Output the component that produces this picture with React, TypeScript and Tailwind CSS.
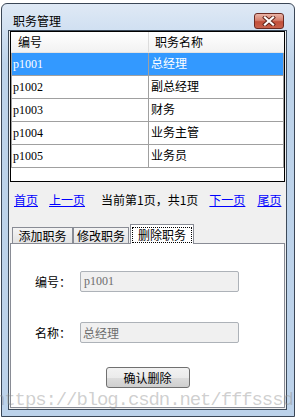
import React from 'react';

const rows = [
  { id: 'p1001', name: '总经理' },
  { id: 'p1002', name: '副总经理' },
  { id: 'p1003', name: '财务' },
  { id: 'p1004', name: '业务主管' },
  { id: 'p1005', name: '业务员' },
];

const cjk = 'font-["Noto_Sans_CJK_SC",sans-serif]';
const mixed = 'font-["Liberation_Serif","Noto_Sans_CJK_SC",serif]';

function CloseButton() {
  return (
    <div className="w-[30px] h-[16px] mt-[9px] mr-[3px] rounded-[3px] border border-[#6b2a22] bg-[linear-gradient(to_bottom,#eab3a6_0%,#d6806e_45%,#c24f3a_55%,#c8614c_100%)] flex items-center justify-center">
      <svg width="14" height="10" viewBox="0 0 14 10">
        <path d="M3 1.5 L11 8.5 M11 1.5 L3 8.5" stroke="#5c2219" strokeWidth="4" strokeLinecap="square" />
        <path d="M3 1.5 L11 8.5 M11 1.5 L3 8.5" stroke="#ffffff" strokeWidth="2.2" strokeLinecap="square" />
      </svg>
    </div>
  );
}

function Tab({ label, width }: { label: string; width: string }) {
  return (
    <div
      className={`${width} h-[16px] border border-b-0 border-[#898c95] bg-[linear-gradient(to_bottom,#f4f4f4,#e3e3e3)] flex items-center justify-center text-[12px] leading-[14px] text-black`}
    >
      {label}
    </div>
  );
}

export default function App() {
  return (
    <div className={`relative w-[296px] h-[420px] bg-white overflow-hidden pt-[3px] pl-[1px] ${cjk}`}>
      {/* window */}
      <div className="w-[294px] h-[414px] border border-[#3a4656] rounded-t-[6px] bg-[linear-gradient(to_bottom,#dfe9f5_0px,#cfdff1_28px,#bdd3ea_60px,#bcd2ea_100%)] flex flex-col pl-[6px] pr-[7px] pb-[6px]">
        {/* title bar */}
        <div className="h-[26px] flex items-start justify-between">
          <div className="pl-[5px] pt-[9px] text-[12px] leading-[16px] text-black">职务管理</div>
          <CloseButton />
        </div>

        {/* client */}
        <div className="flex-1 border border-[#3c4a5a] bg-[#f0f0f0] flex flex-col">
          {/* list view */}
          <div className="mx-[1px] h-[151px] border border-black bg-white flex flex-col">
            <div className="h-[21px] flex border-b border-[#e3e3e3] bg-[linear-gradient(to_bottom,#ffffff,#f2f2f2)] text-[12px] leading-[20px] text-black">
              <div className="w-[138px] pl-[7px] border-r border-[#dcdcdc]">编号</div>
              <div className="flex-1 pl-[6px]">职务名称</div>
            </div>
            {rows.map((r, i) => {
              const sel = i === 0;
              return (
                <div
                  key={r.id}
                  className={`h-[23px] w-[273px] flex border-b border-[#a0a0a0] text-[12px] leading-[22px] ${mixed} ${
                    sel ? 'bg-[#3399ff] text-white' : 'text-black'
                  }`}
                >
                  <div className="w-[138px] border-x border-[#a0a0a0] pl-[1px]">{r.id}</div>
                  <div className="flex-1 border-r border-[#a0a0a0] pl-[2px]">{r.name}</div>
                </div>
              );
            })}
          </div>

          {/* pager */}
          <div className="h-[42px] flex items-start pt-[10px] pl-[5px] text-[12px] leading-[16px]">
            <span className="text-[#0000ff] underline">首页</span>
            <span className="ml-[11px] text-[#0000ff] underline">上一页</span>
            <span className="ml-[16px] text-black">当前第1页，共1页</span>
            <span className="ml-[11px] text-[#0000ff] underline">下一页</span>
            <span className="ml-[12px] text-[#0000ff] underline">尾页</span>
          </div>

          {/* tabs */}
          <div className="h-[19px] flex items-end pl-[3px]">
            <Tab label="添加职务" width="w-[61px]" />
            <Tab label="修改职务" width="w-[56px]" />
            <div className="relative z-10 ml-[1px] mb-[-1px] w-[64px] h-[20px] border border-b-0 border-[#898c95] bg-white px-[1px] pt-[2px] pb-[1px]">
              <div className="h-full border border-dotted border-black flex items-center justify-center text-[12px] leading-[14px] text-black">
                删除职务
              </div>
            </div>
          </div>

          <div className="mx-[1px] h-[165px] border border-[#898c95] bg-white flex flex-col pt-[27px] pl-[24px]">
            <div className="flex items-center h-[21px]">
              <div className="w-[45px] text-[12px] leading-[16px] text-black">编号：</div>
              <div className={`w-[159px] h-[21px] rounded-[2px] border border-[#adb2b8] bg-[#f0f0f0] pl-[3px] text-[12px] leading-[19px] text-[#6d6d6d] ${mixed}`}>
                p1001
              </div>
            </div>
            <div className="flex items-center h-[21px] mt-[30px]">
              <div className="w-[45px] text-[12px] leading-[16px] text-black">名称：</div>
              <div className="w-[159px] h-[21px] rounded-[2px] border border-[#adb2b8] bg-[#f0f0f0] pl-[2px] text-[12px] leading-[19px] text-[#6d6d6d]">
                总经理
              </div>
            </div>
            <div className="flex justify-center mt-[24px] -ml-[24px]">
              <div className="w-[84px] h-[21px] rounded-[3px] border border-[#707070] bg-[linear-gradient(to_bottom,#f2f2f2_0%,#ebebeb_50%,#dddddd_51%,#cfcfcf_100%)] flex items-center justify-center text-[12px] leading-[14px] text-black">
                确认删除
              </div>
            </div>
          </div>
        </div>
      </div>

      {/* watermark */}
      <div className='absolute left-[-6px] top-[388px] whitespace-nowrap font-["Liberation_Mono",monospace] text-[19px] leading-[24px] tracking-[-1.1px] text-[rgba(140,140,140,0.42)]'>
        https://blog.csdn.net/fffsssd
      </div>
    </div>
  );
}
